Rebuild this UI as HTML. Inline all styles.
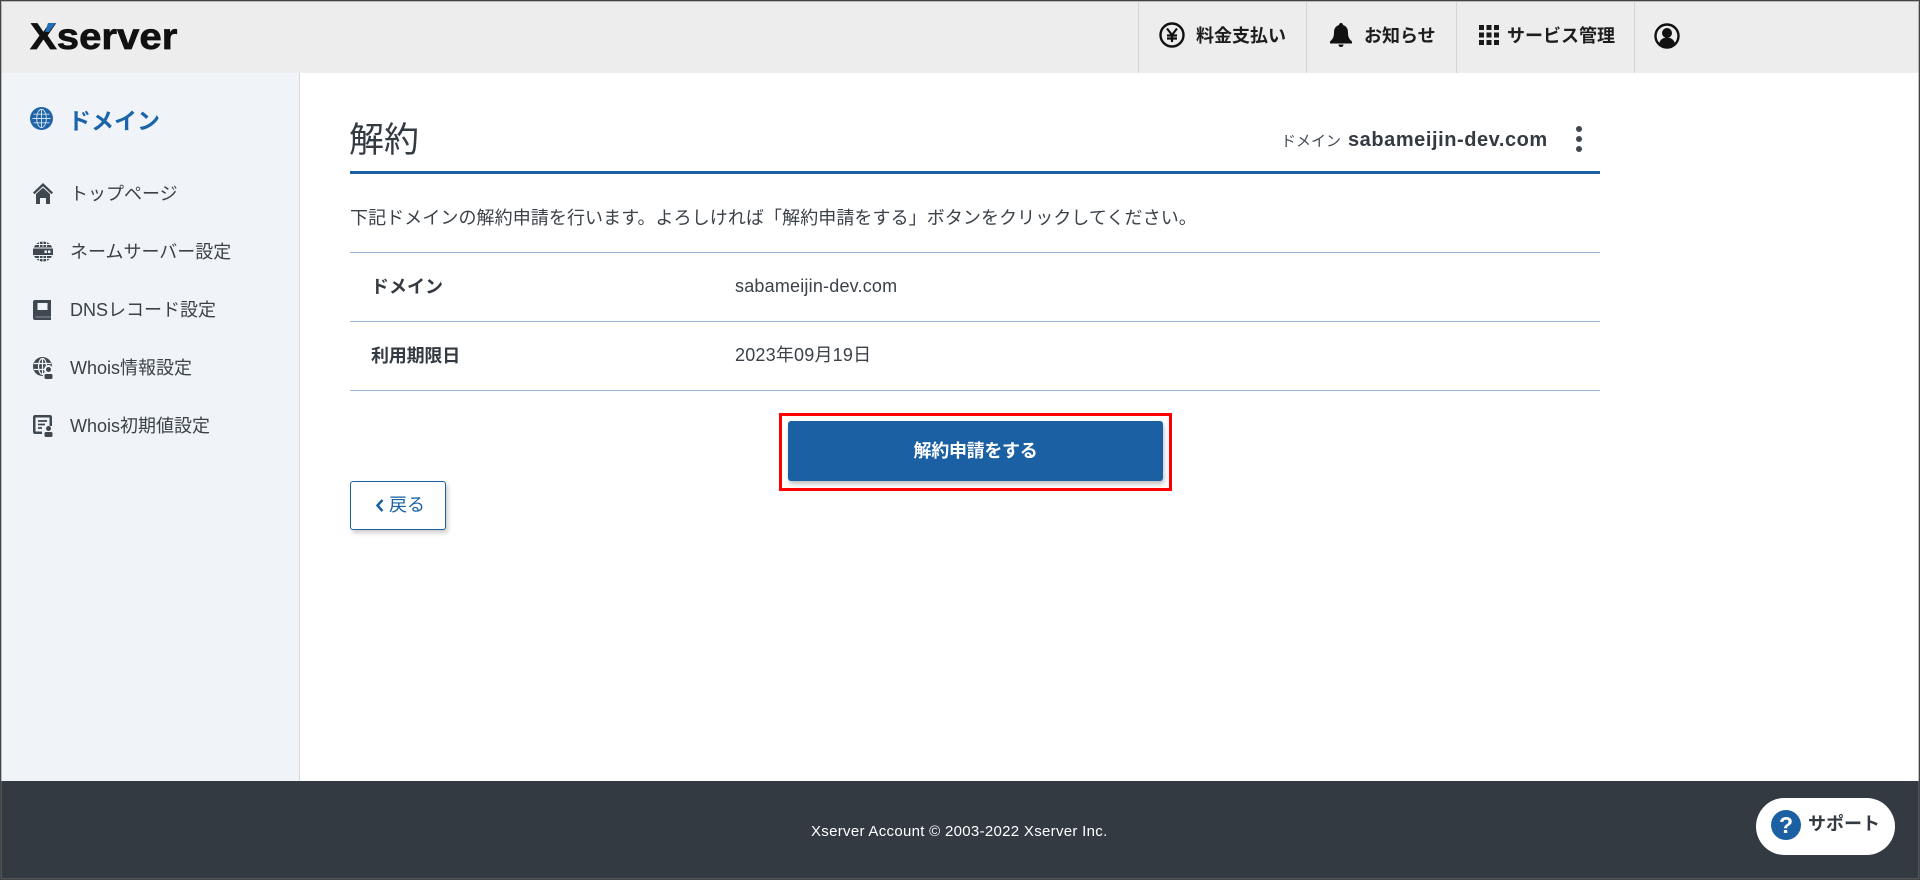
<!DOCTYPE html>
<html lang="ja"><head><meta charset="utf-8"><title>解約</title>
<style>
*{box-sizing:border-box;margin:0;padding:0}
html,body{width:1920px;height:880px;overflow:hidden;background:#fff}
body{position:relative;font-family:"Liberation Sans","Noto Sans CJK JP",sans-serif;color:#333a42}
.a{position:absolute;white-space:nowrap}
.b{font-weight:700}
.nav{left:70px;font-size:18px;line-height:24px;color:#3a4149}
.hd{font-size:18px;font-weight:700;line-height:24px;top:24px;color:#1d1d1d}
.div{position:absolute;top:2px;width:1px;height:71px;background:#d5d5d5}
.ln{position:absolute;left:350px;width:1250px;height:1px;background:#9bb6d4}
svg{position:absolute;display:block}
</style></head><body>
<div class="a" style="left:0;top:0;width:1920px;height:73px;background:#ededed"></div>
<div class="a" style="left:0;top:73px;width:300px;height:708px;background:#f0f4f8;border-right:1px solid #d3d9de"></div>
<div class="a" style="left:0;top:781px;width:1920px;height:99px;background:#333a42"></div>

<div class="a b" style="left:30px;top:15px;font-size:37px;line-height:44px;color:#111;-webkit-text-stroke:.7px #111;transform-origin:0 50%;transform:scaleX(1.085)">Xserver</div>
<svg style="left:44px;top:22px" width="14" height="12"><path d="M4 1h8L5 10H1z" fill="#1f6db3"/></svg>

<div class="div" style="left:1138px"></div><div class="div" style="left:1306px"></div><div class="div" style="left:1456px"></div><div class="div" style="left:1634px"></div>
<svg style="left:1159px;top:22px" width="26" height="26" viewBox="0 0 26 26"><circle cx="13" cy="13" r="11.5" fill="none" stroke="#111" stroke-width="2.4"/><path d="M8 6.500l5 6.500 5-6.500M13 13v7M8 13.500h10M8 16.500h10" fill="none" stroke="#111" stroke-width="2.200"/></svg>
<div class="a hd" style="left:1196px">料金支払い</div>
<svg style="left:1329px;top:22px" width="24" height="26" viewBox="0 0 24 26"><path d="M12 1c1.200 0 2 .8 2 2 3.500 1 5 3.800 5 7.500 0 4 1 6.500 4 9v2H1v-2c3-2.500 4-5 4-9C5 6.800 6.500 4 10 3c0-1.200.8-2 2-2zM9.500 22.500h5c0 1.500-1 2.500-2.500 2.500s-2.500-1-2.500-2.500z" fill="#111"/></svg>
<div class="a hd" style="left:1364px">お知らせ</div>
<svg style="left:1479px;top:25px" width="20" height="20" fill="#1a1a1a"><rect width="5" height="5"/><rect x="7.500" width="5" height="5"/><rect x="15" width="5" height="5"/><rect y="7.500" width="5" height="5"/><rect x="7.500" y="7.500" width="5" height="5"/><rect x="15" y="7.500" width="5" height="5"/><rect y="15" width="5" height="5"/><rect x="7.500" y="15" width="5" height="5"/><rect x="15" y="15" width="5" height="5"/></svg>
<div class="a hd" style="left:1507px">サービス管理</div>
<svg style="left:1654px;top:23px" width="26" height="26" viewBox="0 0 26 26"><circle cx="13" cy="13" r="11.500" fill="none" stroke="#111" stroke-width="2.400"/><circle cx="13" cy="10" r="5" fill="#111"/><path d="M5 21c.8-4 3.700-6.500 8-6.500s7.200 2.500 8 6.500c-2 2-5 3-8 3s-6-1-8-3z" fill="#111"/></svg>

<svg style="left:30px;top:107px" width="23" height="23" viewBox="0 0 24 24"><circle cx="12" cy="12" r="12" fill="#1f64a8"/><g fill="none" stroke="#cfe0ef" stroke-width="1"><ellipse cx="12" cy="12" rx="5" ry="9.500"/><path d="M12 2.500v19M2.500 12h19M3.700 7.500h16.600M3.700 16.500h16.600"/></g></svg>
<div class="a b" style="left:68px;top:107px;font-size:23px;line-height:28px;color:#1c64a9">ドメイン</div>

<svg style="left:33px;top:183px" width="20" height="21" viewBox="0 0 20 21" fill="#3f4750"><path d="M10 0L0 9.500l1.500 1.700L10 3.300l8.500 7.900L20 9.500z"/><path d="M3 11L10 4.700 17 11v10h-4v-6H7v6H3z"/></svg>
<div class="a nav" style="top:182px;left:70px">トップページ</div>
<svg style="left:33px;top:241px" width="20" height="21" viewBox="0 0 20 21"><circle cx="10" cy="10.500" r="10" fill="#3f4750"/><g stroke="#f0f4f8" stroke-width=".9" fill="none"><path d="M10 0v6M10 15v6M6.500 1v5M13.500 1v5M6.500 15v5M13.500 15v5M2 3.500h16M2 17.500h16"/></g><rect x="0" y="7.500" width="20" height="6.500" fill="#3f4750"/><rect x="0" y="6.500" width="20" height="1" fill="#f0f4f8"/><rect x="0" y="14" width="20" height="1" fill="#f0f4f8"/><rect x="11.500" y="9.500" width="2.500" height="2.500" fill="#f0f4f8"/><rect x="15" y="9.500" width="2.500" height="2.500" fill="#f0f4f8"/></svg>
<div class="a nav" style="top:240px">ネームサーバー設定</div>
<svg style="left:33px;top:300px" width="18" height="20" viewBox="0 0 18 20"><path d="M2 0h16v20H2c-1.200 0-2-.8-2-2V2C0 .8.800 0 2 0z" fill="#3f4750"/><rect x="4.500" y="3" width="10" height="7" fill="#f0f4f8"/><rect x="2.500" y="16.500" width="15.500" height="1" fill="#8a929a"/></svg>
<div class="a nav" style="top:298px">DNSレコード設定</div>
<svg style="left:33px;top:357px" width="20" height="22" viewBox="0 0 20 22"><circle cx="9.500" cy="9.500" r="9.500" fill="#3f4750"/><g fill="none" stroke="#f0f4f8" stroke-width="1.200"><ellipse cx="9.500" cy="9.500" rx="4" ry="8"/><path d="M9.500 1v17M1 6.500h17M1 12.500h17"/></g><circle cx="15.500" cy="12.500" r="4.500" fill="#f0f4f8"/><circle cx="15.500" cy="12.500" r="2.500" fill="#3f4750"/><rect x="10" y="15.500" width="10" height="6.500" rx="2" fill="#f0f4f8"/><rect x="11.500" y="17" width="8" height="5" rx="1.500" fill="#3f4750"/></svg>
<div class="a nav" style="top:356px">Whois情報設定</div>
<svg style="left:33px;top:415px" width="20" height="22" viewBox="0 0 20 22"><path d="M2 0h15c1.100 0 2 .9 2 2v9h-2.500V2.500h-14v14H9V19H2c-1.100 0-2-.9-2-2V2C0 .9.900 0 2 0z" fill="#3f4750"/><path d="M5 6h9M5 9.500h7M5 13h4" stroke="#3f4750" stroke-width="1.800"/><circle cx="15.500" cy="13.500" r="2.500" fill="#3f4750"/><rect x="11.500" y="17" width="8" height="5" rx="1.500" fill="#3f4750"/></svg>
<div class="a nav" style="top:414px">Whois初期値設定</div>

<div class="a" style="left:349px;top:119px;font-size:35px;line-height:44px;color:#333a42">解約</div>
<div class="a" style="left:1281px;top:132px;font-size:15px;line-height:20px;color:#444b52">ドメイン</div>
<div class="a b" style="left:1348px;top:128px;font-size:20px;line-height:24px;letter-spacing:.56px;color:#333a42">sabameijin-dev.com</div>
<svg style="left:1575px;top:125px" width="8" height="28" fill="#3f4750"><circle cx="4" cy="4" r="3"/><circle cx="4" cy="14" r="3"/><circle cx="4" cy="24" r="3"/></svg>
<div class="a" style="left:350px;top:171px;width:1250px;height:3px;background:#1b60a3"></div>

<div class="a" style="left:350px;top:206px;font-size:18px;line-height:24px;color:#3a4149;letter-spacing:.08px">下記ドメインの解約申請を行います。よろしければ「解約申請をする」ボタンをクリックしてください。</div>

<div class="ln" style="top:252px"></div><div class="ln" style="top:321px"></div><div class="ln" style="top:390px"></div>
<div class="a b" style="left:371px;top:275px;font-size:18px;line-height:24px">ドメイン</div>
<div class="a" style="left:735px;top:274px;font-size:18px;line-height:24px;color:#3a4149;letter-spacing:.2px">sabameijin-dev.com</div>
<div class="a b" style="left:371px;top:344px;font-size:18px;line-height:24px;letter-spacing:-.2px">利用期限日</div>
<div class="a" style="left:735px;top:343px;font-size:18px;line-height:24px;color:#3a4149;letter-spacing:.2px">2023年09月19日</div>

<div class="a" style="left:779px;top:413px;width:393px;height:78px;border:3px solid #f00"></div>
<div class="a b" style="left:788px;top:421px;width:375px;height:60px;background:#1b60a3;border-radius:3px;box-shadow:1px 3px 5px rgba(0,0,0,.25);color:#fff;font-size:18px;line-height:61px;letter-spacing:-.3px;text-align:center">解約申請をする</div>

<div class="a" style="left:350px;top:481px;width:96px;height:49px;border:1px solid #1b60a3;border-radius:3px;background:#fff;box-shadow:2px 3px 5px rgba(0,0,0,.2)"></div>
<svg style="left:374px;top:498px" width="11" height="15"><path d="M8.500 2L3.500 7.500l5 5.500" fill="none" stroke="#1b60a3" stroke-width="2.500"/></svg>
<div class="a" style="left:389px;top:493px;font-size:18px;line-height:24px;color:#1b60a3">戻る</div>

<div class="a" style="left:811px;top:822px;font-size:15px;line-height:20px;color:#fff;letter-spacing:.3px">Xserver Account © 2003-2022 Xserver Inc.</div>
<div class="a" style="left:1756px;top:798px;width:139px;height:57px;border-radius:28.500px;background:#fff"></div>
<div class="a b" style="left:1771px;top:810px;width:30px;height:30px;border-radius:50%;background:#1b60a3;color:#fff;font-size:23px;line-height:30px;text-align:center">?</div>
<div class="a b" style="left:1808px;top:812px;font-size:18px;line-height:24px;color:#333a42">サポート</div>

<div class="a" style="left:0;top:0;width:1920px;height:880px;border:1px solid #444;box-shadow:inset 0 0 0 1px rgba(120,120,120,.45);pointer-events:none"></div>
</body></html>
